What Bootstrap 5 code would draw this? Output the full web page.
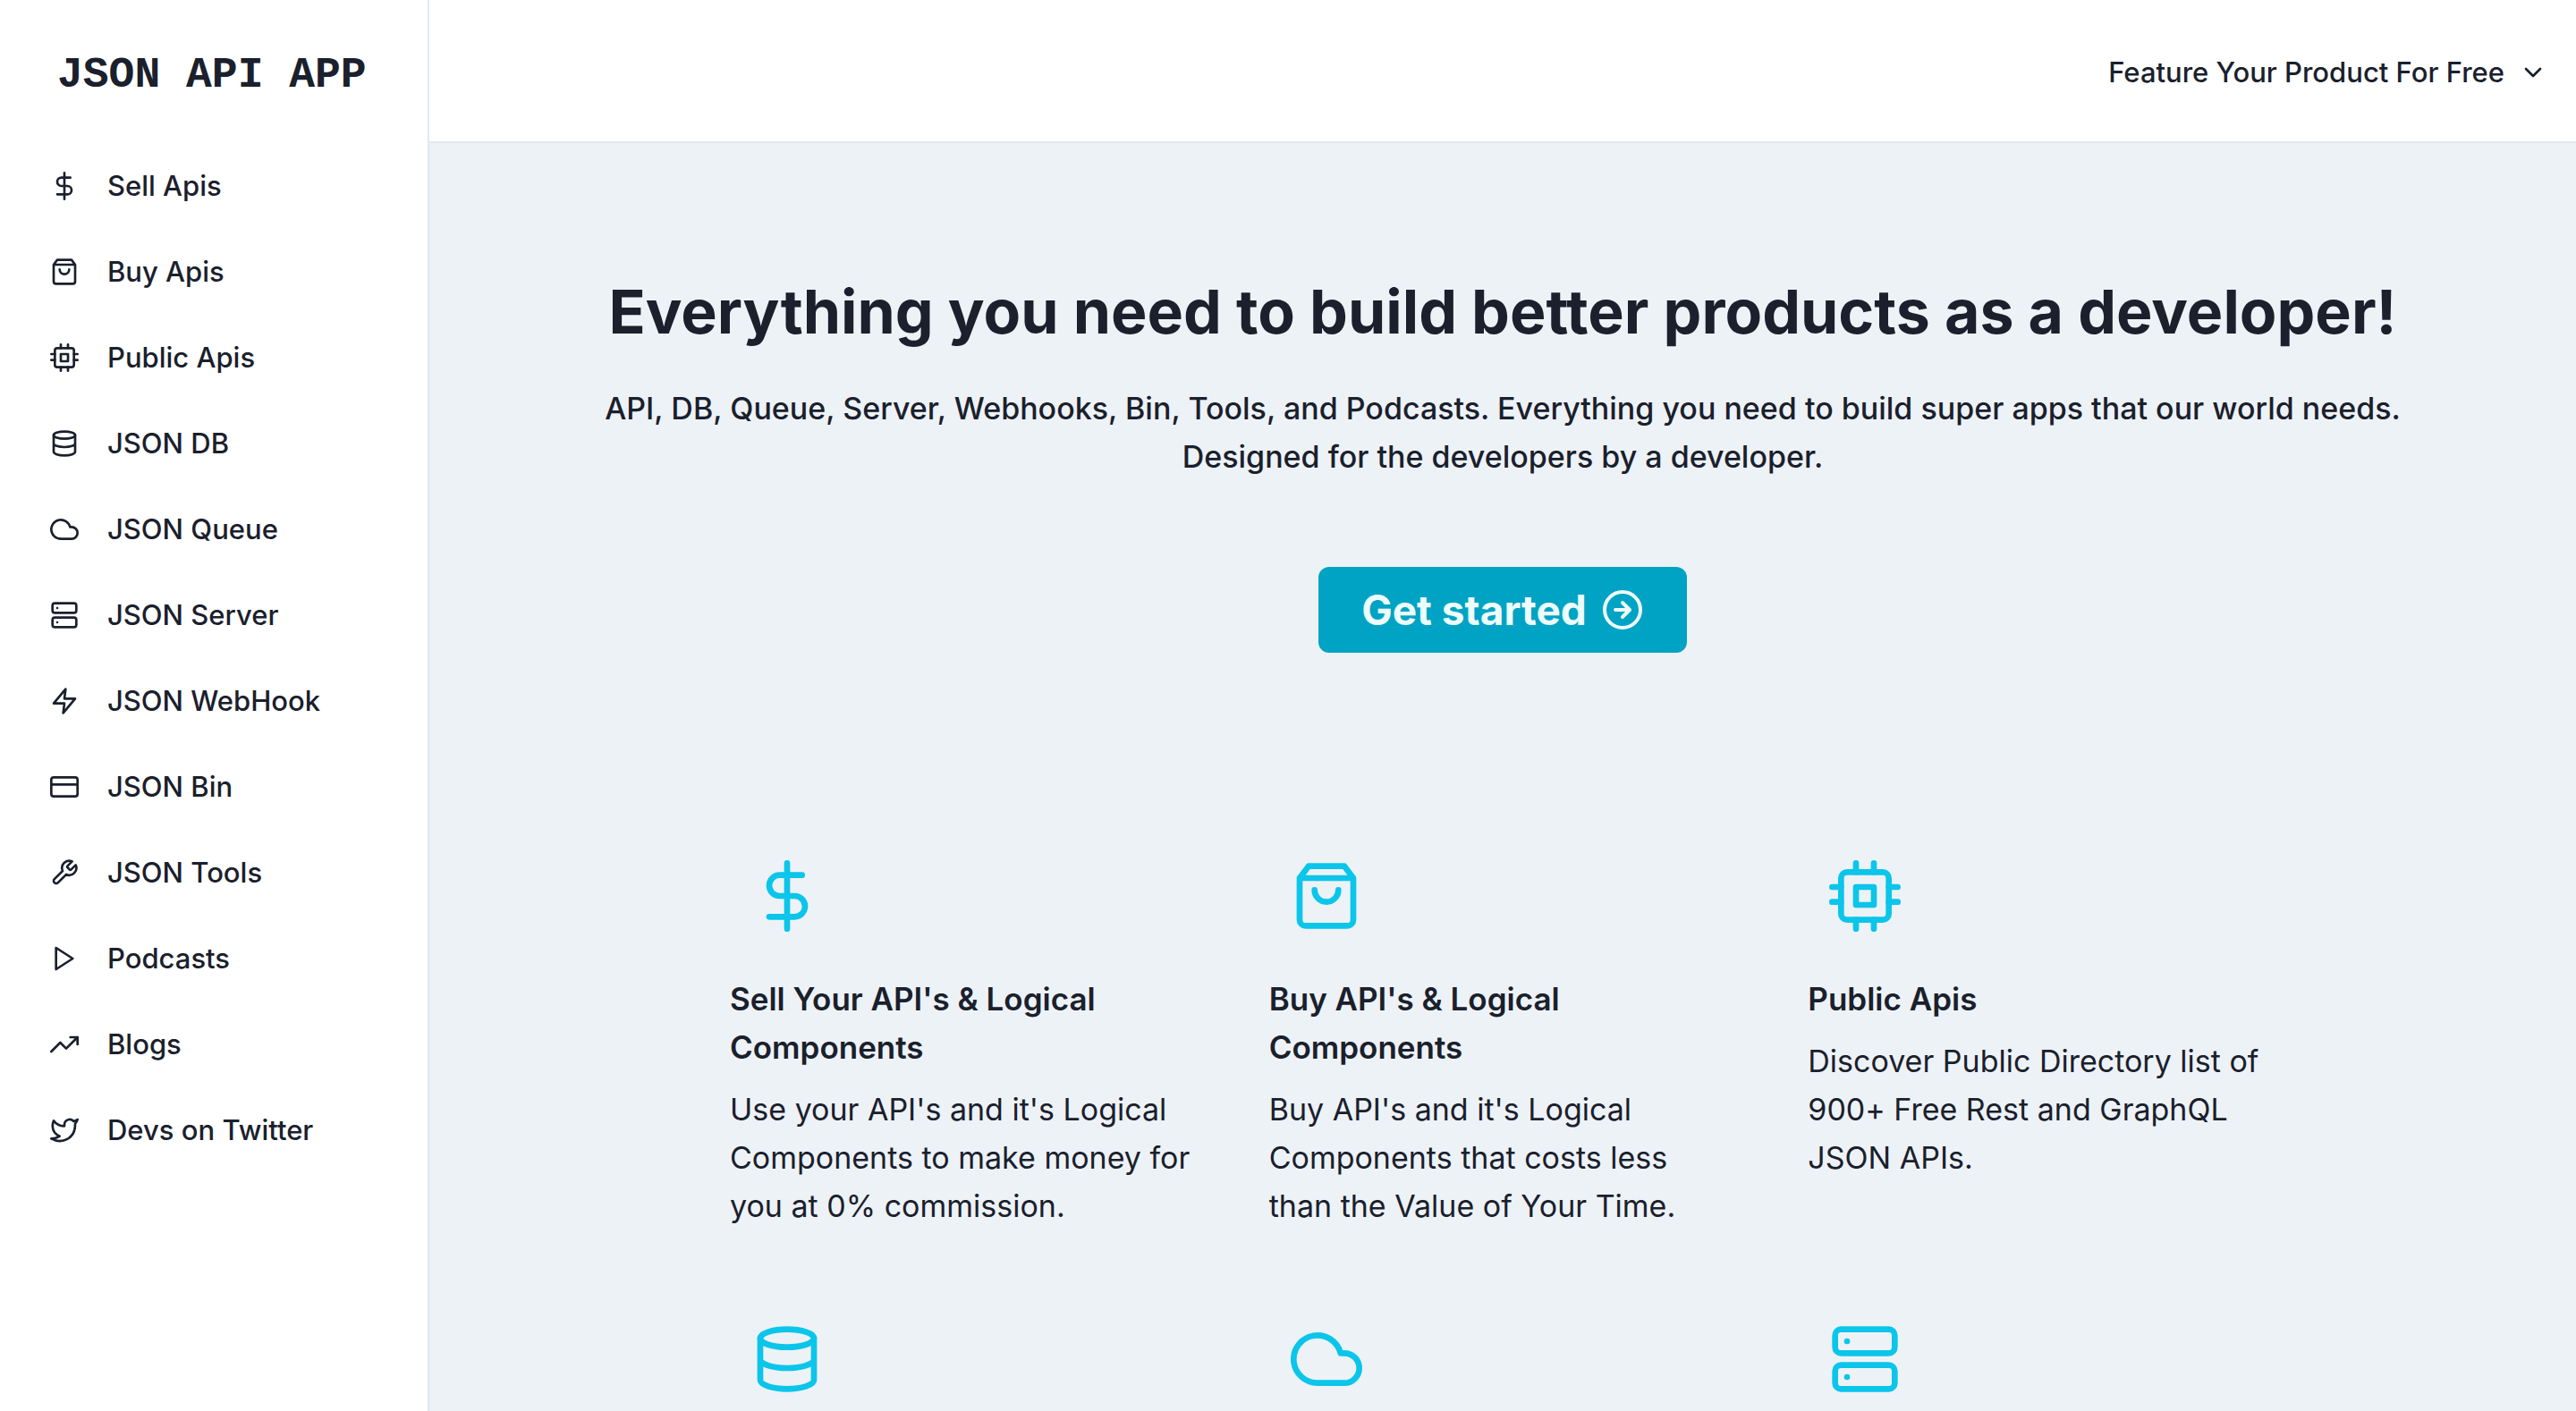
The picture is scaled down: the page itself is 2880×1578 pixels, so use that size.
<!DOCTYPE html>
<html lang="en">
<head>
<meta charset="utf-8">
<meta name="viewport" content="width=device-width, initial-scale=1">
<title>JSON API APP</title>
<link href="https://cdn.jsdelivr.net/npm/bootstrap@5.3.0/dist/css/bootstrap.min.css" rel="stylesheet">
<style>
  body { font-family: Inter, "Liberation Sans", sans-serif; font-size: 32px; line-height: 48px; color: #1a202c; background: #edf2f7; font-variant-ligatures: none; }
  .fi { fill: none; stroke: currentColor; stroke-width: 2; stroke-linecap: round; stroke-linejoin: round; flex-shrink: 0; width: 32px; height: 32px; }
  .side { width: 480px; border-right: 2px solid #e2e8f0; }
  .brand { height: 160px; padding: 8px 64px 0; font-family: "Liberation Mono", monospace; font-size: 48px; font-weight: 700; color: inherit; }
  .side .nav-link { height: 96px; padding: 0 56px; gap: 32px; color: inherit; font-size: 31px; font-weight: 500; }
  .topbar { height: 160px; padding: 4px 32px 0; border-bottom: 2px solid #e2e8f0; }
  .promo { font-size: 31px; line-height: 48px; font-weight: 500; gap: 16px; color: inherit; }
  .hero { padding-top: 148px; }
  .hero h1 { font-size: 68px; line-height: 80px; font-weight: 700; margin-bottom: 42px; }
  .hero p { font-size: 34px; line-height: 54px; font-weight: 500; margin-bottom: 96px; }
  .cta { height: 96px; padding: 0 48px; gap: 16px; border-radius: 12px; background: #00a3c4; color: #edfdfd; font-size: 46px; font-weight: 700; }
  .cta .fi { width: 48px; height: 48px; }
  .features { max-width: 1808px; padding: 208px 40px 0; }
  .features .row { --bs-gutter-x: 80px; --bs-gutter-y: 80px; }
  .tile { width: 128px; height: 128px; margin-bottom: 24px; color: #0bc5ea; }
  .tile .fi { width: 80px; height: 80px; }
  .features h2 { font-size: 35px; line-height: 54px; font-weight: 600; margin-bottom: 16px; }
  .features p { font-size: 34px; line-height: 54px; margin: 0; }
</style>
<script src="https://cdn.jsdelivr.net/npm/bootstrap@5.3.0/dist/js/bootstrap.bundle.min.js"></script>
</head>
<body>
<svg width="0" height="0" class="d-none" aria-hidden="true">
  <symbol id="dollar" viewBox="0 0 24 24"><path d="M12 1v22M17 5H9.500a3.500 3.500 0 0 0 0 7h5a3.500 3.500 0 0 1 0 7H6"/></symbol>
  <symbol id="bag" viewBox="0 0 24 24"><path d="M6 2 3 6v14a2 2 0 0 0 2 2h14a2 2 0 0 0 2-2V6l-3-4zM3 6h18M16 10a4 4 0 0 1-8 0"/></symbol>
  <symbol id="cpu" viewBox="0 0 24 24"><rect x="4" y="4" width="16" height="16" rx="2"/><rect x="9" y="9" width="6" height="6"/><path d="M9 1v3M15 1v3M9 20v3M15 20v3M20 9h3M20 14h3M1 9h3M1 14h3"/></symbol>
  <symbol id="database" viewBox="0 0 24 24"><ellipse cx="12" cy="5" rx="9" ry="3"/><path d="M21 12c0 1.660-4 3-9 3s-9-1.340-9-3M3 5v14c0 1.660 4 3 9 3s9-1.340 9-3V5"/></symbol>
  <symbol id="cloud" viewBox="0 0 24 24"><path d="M18 10h-1.260A8 8 0 1 0 9 20h9a5 5 0 0 0 0-10z"/></symbol>
  <symbol id="server" viewBox="0 0 24 24"><rect x="2" y="2" width="20" height="8" rx="2"/><rect x="2" y="14" width="20" height="8" rx="2"/><path d="M6 6h.01M6 18h.01"/></symbol>
  <symbol id="zap" viewBox="0 0 24 24"><path d="M13 2 3 14h9l-1 8 10-12h-9z"/></symbol>
  <symbol id="cardicon" viewBox="0 0 24 24"><rect x="1" y="4" width="22" height="16" rx="2"/><path d="M1 10h22"/></symbol>
  <symbol id="tool" viewBox="0 0 24 24"><path d="M14.700 6.300a1 1 0 0 0 0 1.400l1.600 1.600a1 1 0 0 0 1.400 0l3.770-3.770a6 6 0 0 1-7.940 7.940l-6.910 6.910a2.120 2.120 0 0 1-3-3l6.910-6.910a6 6 0 0 1 7.940-7.940l-3.760 3.760z"/></symbol>
  <symbol id="play" viewBox="0 0 24 24"><path d="m5 3 14 9-14 9z"/></symbol>
  <symbol id="trend" viewBox="0 0 24 24"><path d="m23 6-9.500 9.500-5-5L1 18M17 6h6v6"/></symbol>
  <symbol id="twitter" viewBox="0 0 24 24"><path d="M23 3a10.900 10.900 0 0 1-3.140 1.530 4.480 4.480 0 0 0-7.860 3v1A10.660 10.660 0 0 1 3 4s-4 9 5 13a11.640 11.640 0 0 1-7 2c9 5 20 0 20-11.500a4.500 4.500 0 0 0-.08-.83A7.720 7.720 0 0 0 23 3z"/></symbol>
  <symbol id="chevron" viewBox="0 0 24 24"><path d="m6 9 6 6 6-6"/></symbol>
  <symbol id="arrow" viewBox="0 0 24 24"><circle cx="12" cy="12" r="10"/><path d="m12 16 4-4-4-4M8 12h8"/></symbol>
</svg>
<div class="d-flex vh-100 overflow-hidden">
  <aside class="side bg-white flex-shrink-0">
    <a class="brand d-flex align-items-center text-decoration-none text-nowrap" href="#">JSON API APP</a>
    <nav class="nav flex-column" aria-label="Main">
      <a class="nav-link d-flex align-items-center" href="#"><svg class="fi"><use href="#dollar"/></svg>Sell Apis</a>
      <a class="nav-link d-flex align-items-center" href="#"><svg class="fi"><use href="#bag"/></svg>Buy Apis</a>
      <a class="nav-link d-flex align-items-center" href="#"><svg class="fi"><use href="#cpu"/></svg>Public Apis</a>
      <a class="nav-link d-flex align-items-center" href="#"><svg class="fi"><use href="#database"/></svg>JSON DB</a>
      <a class="nav-link d-flex align-items-center" href="#"><svg class="fi"><use href="#cloud"/></svg>JSON Queue</a>
      <a class="nav-link d-flex align-items-center" href="#"><svg class="fi"><use href="#server"/></svg>JSON Server</a>
      <a class="nav-link d-flex align-items-center" href="#"><svg class="fi"><use href="#zap"/></svg>JSON WebHook</a>
      <a class="nav-link d-flex align-items-center" href="#"><svg class="fi"><use href="#cardicon"/></svg>JSON Bin</a>
      <a class="nav-link d-flex align-items-center" href="#"><svg class="fi"><use href="#tool"/></svg>JSON Tools</a>
      <a class="nav-link d-flex align-items-center" href="#"><svg class="fi"><use href="#play"/></svg>Podcasts</a>
      <a class="nav-link d-flex align-items-center" href="#"><svg class="fi"><use href="#trend"/></svg>Blogs</a>
      <a class="nav-link d-flex align-items-center" href="#"><svg class="fi"><use href="#twitter"/></svg>Devs on Twitter</a>
    </nav>
  </aside>
  <div class="flex-grow-1">
    <header class="topbar bg-white d-flex align-items-center justify-content-end">
      <button class="promo btn border-0 p-0 d-flex align-items-center" type="button">Feature Your Product For Free<svg class="fi"><use href="#chevron"/></svg></button>
    </header>
    <main>
      <section class="hero text-center">
        <h1>Everything you need to build better products as a developer!</h1>
        <p>API, DB, Queue, Server, Webhooks, Bin, Tools, and Podcasts. Everything you need to build super apps that our world needs.<br>Designed for the developers by a developer.</p>
        <button class="cta btn border-0 d-inline-flex align-items-center" type="button">Get started<svg class="fi"><use href="#arrow"/></svg></button>
      </section>
      <section class="features container-fluid">
        <div class="row row-cols-3">
          <div class="col">
            <div class="tile d-flex align-items-center justify-content-center"><svg class="fi"><use href="#dollar"/></svg></div>
            <h2>Sell Your API's &amp; Logical Components</h2>
            <p>Use your API's and it's Logical Components to make money for you at 0% commission.</p>
          </div>
          <div class="col">
            <div class="tile d-flex align-items-center justify-content-center"><svg class="fi"><use href="#bag"/></svg></div>
            <h2>Buy API's &amp; Logical Components</h2>
            <p>Buy API's and it's Logical Components that costs less than the Value of Your Time.</p>
          </div>
          <div class="col">
            <div class="tile d-flex align-items-center justify-content-center"><svg class="fi"><use href="#cpu"/></svg></div>
            <h2>Public Apis</h2>
            <p>Discover Public Directory list of 900+ Free Rest and GraphQL JSON APIs.</p>
          </div>
          <div class="col">
            <div class="tile d-flex align-items-center justify-content-center"><svg class="fi"><use href="#database"/></svg></div>
          </div>
          <div class="col">
            <div class="tile d-flex align-items-center justify-content-center"><svg class="fi"><use href="#cloud"/></svg></div>
          </div>
          <div class="col">
            <div class="tile d-flex align-items-center justify-content-center"><svg class="fi"><use href="#server"/></svg></div>
          </div>
        </div>
      </section>
    </main>
  </div>
</div>
</body>
</html>
